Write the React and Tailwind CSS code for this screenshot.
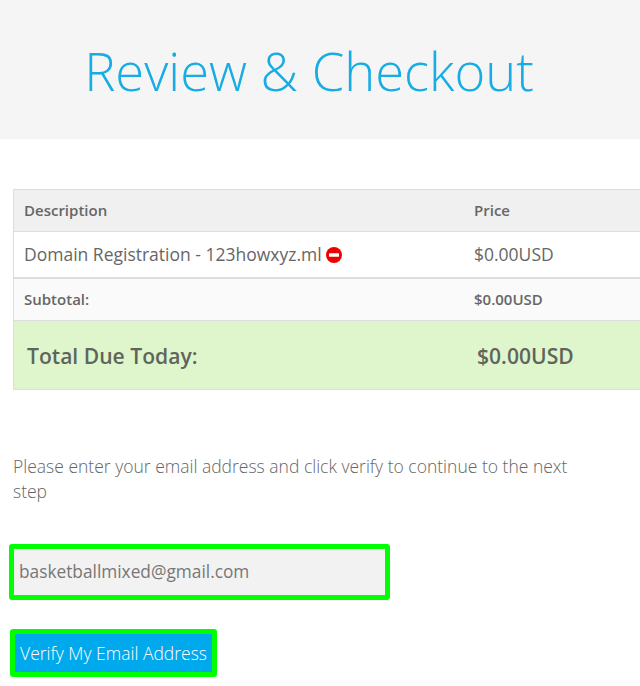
import React from 'react';

function RemoveIcon() {
  return (
    <svg width="16" height="16" viewBox="0 0 16 16" className="ml-[4px] shrink-0">
      <circle cx="8" cy="8" r="8" fill="#f00000" />
      <rect x="3" y="6.2" width="10" height="3.6" rx="0.5" fill="#fff" />
    </svg>
  );
}

export default function App() {
  return (
    <div className="h-[686px] overflow-hidden bg-white font-['Open_Sans',sans-serif] text-[#666]">
      <div className="flex h-[139px] justify-center bg-[#f5f5f5] pt-[33px] pr-[22px]">
        <h1 className="text-[52.5px] leading-[76px] font-light text-[#17ace4]">Review &amp; Checkout</h1>
      </div>

      <div className="mt-[50px] ml-[13px] border border-r-0 border-[#ddd] text-[#666]">
        <div className="flex h-[42px] items-center border-b border-[#ddd] bg-[#f0f0f0] pl-[10px] text-[15px] font-semibold">
          <div className="w-[450px]">Description</div>
          <div>Price</div>
        </div>
        <div className="flex h-[47px] items-center border-b-2 border-[#ddd] bg-white pl-[10px] text-[17.5px]">
          <div className="flex w-[450px] items-center">
            Domain Registration - 123howxyz.ml
            <RemoveIcon />
          </div>
          <div>$0.00USD</div>
        </div>
        <div className="flex h-[42px] items-center border-b border-[#ddd] bg-[#fafafa] pl-[10px] text-[15px] font-semibold">
          <div className="w-[450px]">Subtotal:</div>
          <div>$0.00USD</div>
        </div>
        <div className="flex h-[68px] items-center bg-[#dff6cd] pt-[2px] pl-[13px] text-[21.1px] font-semibold text-[#5f655c]">
          <div className="w-[450px]">Total Due Today:</div>
          <div>$0.00USD</div>
        </div>
      </div>

      <p className="mt-[64px] ml-[13px] w-[570px] text-[17.5px] leading-[25px] font-light">
        Please enter your email address and click verify to continue to the next step
      </p>

      <div className="mt-[40px] ml-[9px] flex h-[56px] w-[381px] items-center rounded-[3px] border-[5px] border-[#00ff00] bg-[#f2f2f2] pl-[5px] text-[17.3px] text-[#777]">
        basketballmixed@gmail.com
      </div>

      <button className="mt-[29px] ml-[10px] flex h-[48px] w-[207px] items-center justify-center rounded-[3px] border-[5px] border-[#00ff00] bg-[#00a8ec] text-[17.5px] font-light whitespace-nowrap text-white">
        Verify My Email Address
      </button>
    </div>
  );
}
